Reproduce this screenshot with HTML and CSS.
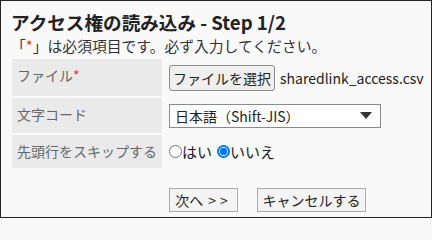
FILE: index.html
```html
<!DOCTYPE html>
<html lang="ja">
<head>
<meta charset="utf-8">
<link rel="stylesheet" href="styles.css">
</head>
<body>
<div class="frame">
  <h1 class="title">アクセス権の読み込み - Step 1/2</h1>
  <p class="note">「<span class="req">*</span>」は必須項目です。必ず入力してください。</p>
  <table class="form">
    <tr class="r1">
      <th class="label">ファイル<span class="req">*</span></th>
      <td class="value">
        <div class="file-row">
          <button class="btn file-btn" type="button">ファイルを選択</button>
          <span class="file-name">sharedlink_access.csv</span>
        </div>
      </td>
    </tr>
    <tr class="r2">
      <th class="label">文字コード</th>
      <td class="value">
        <div class="select">
          <span>日本語（Shift-JIS）</span>
          <svg class="caret" width="12" height="7" viewBox="0 0 12 7"><path d="M0 0h12L6 7z" fill="#333"/></svg>
        </div>
      </td>
    </tr>
    <tr class="r3">
      <th class="label">先頭行をスキップする</th>
      <td class="value">
        <div class="radios">
          <label class="radio"><span class="dot"></span>はい</label>
          <label class="radio"><span class="dot on"></span>いいえ</label>
        </div>
      </td>
    </tr>
  </table>
  <div class="actions">
    <button class="btn act next" type="button">次へ <span class="gt">&gt;&gt;</span></button>
    <button class="btn act cancel" type="button">キャンセルする</button>
  </div>
</div>
</body>
</html>
```

FILE: styles.css
```css
* { box-sizing: border-box; }
html, body {
  margin: 0;
  padding: 0;
  width: 432px;
  height: 218px;
  overflow: hidden;
  background: #f9f9f9;
}
body {
  font-family: "Noto Sans CJK JP", "Noto Sans", sans-serif;
  color: #333;
}
.frame {
  width: 432px;
  height: 218px;
  border: 1px solid #222;
  padding: 8px 0 0 9px;
  background: #f9f9f9;
}
.title {
  margin: 0 0 0 1px;
  font-size: 18.6px;
  font-weight: bold;
  line-height: 26px;
  color: #222;
}
.note {
  margin: 0 0 0 1px;
  font-size: 14.8px;
  line-height: 22px;
  color: #333;
}
.req { color: #e8332a; }
.form {
  border-collapse: separate;
  border-spacing: 2px;
  margin-top: 0;
}
.r1 { height: 37px; }
.r2 { height: 35px; }
.r3 { height: 33px; }
.label {
  width: 150px;
  background: #eaeaea;
  color: #666;
  font-weight: normal;
  font-size: 14px;
  line-height: 20px;
  text-align: left;
  vertical-align: top;
  padding: 6px 5px 0;
}
.value {
  padding: 0 5px;
  font-size: 14px;
  vertical-align: middle;
}
.file-row { display: flex; align-items: center; gap: 5px; }
.btn {
  font-family: inherit;
  font-size: 14px;
  color: #222;
  margin: 0;
}
.file-btn {
  height: 26px;
  width: 106px;
  padding: 0;
  background: #efefef;
  border: 1px solid #8a8a8a;
  border-radius: 3px;
  line-height: 22px;
}
.file-name { color: #222; font-size: 14px; }
.select {
  width: 212px;
  height: 24px;
  background: #fff;
  border: 1px solid #8a8a8a;
  display: flex;
  align-items: center;
  justify-content: space-between;
  padding: 0 8px 0 5px;
  color: #222;
  line-height: 22px;
}
.caret { display: block; }
.radios { display: flex; align-items: center; gap: 5px; line-height: 22px; font-size: 15px; }
.radio { display: flex; align-items: center; color: #222; }
.dot {
  width: 13px;
  height: 13px;
  border: 1px solid #767676;
  border-radius: 50%;
  background: #fff;
}
.dot.on {
  border: 2px solid #0075ff;
  background: radial-gradient(circle, #0075ff 0 3.5px, #fff 4px);
}
.actions {
  display: flex;
  gap: 19px;
  padding-left: 159px;
  margin-top: 18px;
}
.act {
  height: 24px;
  background: #f4f4f4;
  border: 1px solid #aaa;
  border-radius: 0;
  padding: 0;
  line-height: 22px;
}
.gt { letter-spacing: 4px; margin-left: 2px; }
.next { width: 69px; }
.cancel { width: 109px; }
```
